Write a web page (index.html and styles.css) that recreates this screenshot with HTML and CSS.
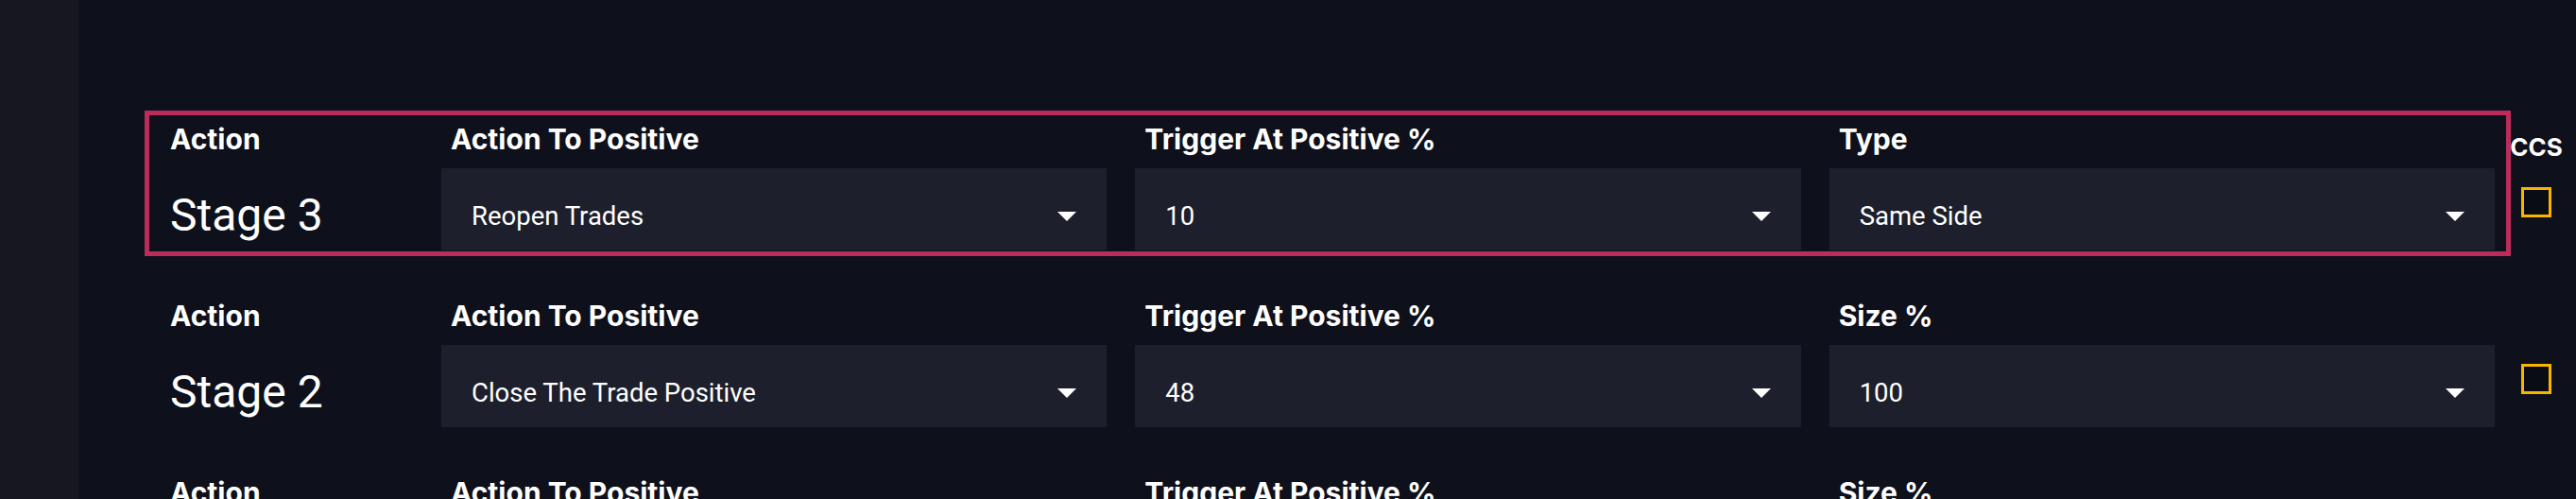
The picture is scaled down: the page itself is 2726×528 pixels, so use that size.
FILE: index.html
```html
<!DOCTYPE html>
<html lang="en">
<head>
<meta charset="utf-8">
<title>Stages</title>
<link rel="stylesheet" href="styles.css">
</head>
<body>
<div class="app">
  <aside class="sidebar"></aside>
  <main class="main">
    <div class="rows">
      <div class="row-wrap">
        <div class="stage-row active">
          <div class="col">
            <div class="label">Action</div>
            <div class="stage-value">Stage 3</div>
          </div>
          <div class="col">
            <div class="label">Action To Positive</div>
            <div class="select"><span class="value">Reopen Trades</span><span class="arrow"></span></div>
          </div>
          <div class="col">
            <div class="label">Trigger At Positive %</div>
            <div class="select"><span class="value">10</span><span class="arrow"></span></div>
          </div>
          <div class="col">
            <div class="label">Type</div>
            <div class="select"><span class="value">Same Side</span><span class="arrow"></span></div>
          </div>
        </div>
        <div class="ccs">
          <div class="ccs-label">CCS</div>
          <div class="checkbox"></div>
        </div>
      </div>

      <div class="row-wrap">
        <div class="stage-row">
          <div class="col">
            <div class="label">Action</div>
            <div class="stage-value">Stage 2</div>
          </div>
          <div class="col">
            <div class="label">Action To Positive</div>
            <div class="select"><span class="value">Close The Trade Positive</span><span class="arrow"></span></div>
          </div>
          <div class="col">
            <div class="label">Trigger At Positive %</div>
            <div class="select"><span class="value">48</span><span class="arrow"></span></div>
          </div>
          <div class="col">
            <div class="label">Size %</div>
            <div class="select"><span class="value">100</span><span class="arrow"></span></div>
          </div>
        </div>
        <div class="ccs">
          <div class="ccs-label"></div>
          <div class="checkbox"></div>
        </div>
      </div>

      <div class="row-wrap">
        <div class="stage-row">
          <div class="col">
            <div class="label">Action</div>
            <div class="stage-value">Stage 1</div>
          </div>
          <div class="col">
            <div class="label">Action To Positive</div>
            <div class="select"><span class="value">Close The Trade Positive</span><span class="arrow"></span></div>
          </div>
          <div class="col">
            <div class="label">Trigger At Positive %</div>
            <div class="select"><span class="value">25</span><span class="arrow"></span></div>
          </div>
          <div class="col">
            <div class="label">Size %</div>
            <div class="select"><span class="value">50</span><span class="arrow"></span></div>
          </div>
        </div>
        <div class="ccs">
          <div class="ccs-label"></div>
          <div class="checkbox"></div>
        </div>
      </div>
    </div>
  </main>
</div>
</body>
</html>
```

FILE: styles.css
```css
html, body {
  margin: 0;
  padding: 0;
  background: #0e101b;
  height: 528px;
  overflow: hidden;
}

.app {
  display: flex;
  height: 528px;
  color: #ffffff;
}

.sidebar {
  width: 83px;
  flex: none;
  background: #17171f;
}

.main {
  flex: 1;
  padding: 117px 0 0 70px;
  overflow: hidden;
}

.rows {
  display: flex;
  flex-direction: column;
  gap: 33px;
}

.row-wrap {
  display: flex;
  align-items: flex-start;
}

.stage-row {
  width: 2504px;
  box-sizing: border-box;
  border: 5px solid transparent;
  padding: 0 12px 1px 22px;
  display: grid;
  grid-template-columns: 257px repeat(3, 1fr);
  column-gap: 30px;
}

.stage-row.active {
  border-color: #bc2c5b;
}

.col {
  display: flex;
  flex-direction: column;
  min-width: 0;
}

.label {
  height: 56px;
  box-sizing: border-box;
  padding: 10px 0 0 10px;
  font-family: "Inter", "Liberation Sans", sans-serif;
  font-weight: 700;
  font-size: 30px;
  line-height: 30px;
  white-space: nowrap;
}

.col:first-child .label {
  padding-left: 0;
}

.stage-value {
  height: 87px;
  box-sizing: border-box;
  padding-top: 12px;
  display: flex;
  align-items: center;
  font-family: "Roboto", "Liberation Sans", sans-serif;
  font-size: 48px;
}

.select {
  height: 87px;
  box-sizing: border-box;
  padding: 14px 32px 0 32px;
  background: #1d202c;
  display: flex;
  align-items: center;
  justify-content: space-between;
  font-family: "Roboto", "Liberation Sans", sans-serif;
  font-size: 27.5px;
}

.arrow {
  width: 0;
  height: 0;
  border-left: 10px solid transparent;
  border-right: 10px solid transparent;
  border-top: 10px solid #ffffff;
}

.ccs {
  width: 54px;
  flex: none;
  padding-top: 26px;
  display: flex;
  flex-direction: column;
  align-items: center;
}

.ccs-label {
  height: 26px;
  font-family: "Inter", "Liberation Sans", sans-serif;
  font-weight: 700;
  font-size: 26px;
  line-height: 26px;
}

.checkbox {
  margin-top: 29px;
  width: 32px;
  height: 32px;
  box-sizing: border-box;
  border: 3px solid #f7b500;
  background: #0a0c14;
}
```
